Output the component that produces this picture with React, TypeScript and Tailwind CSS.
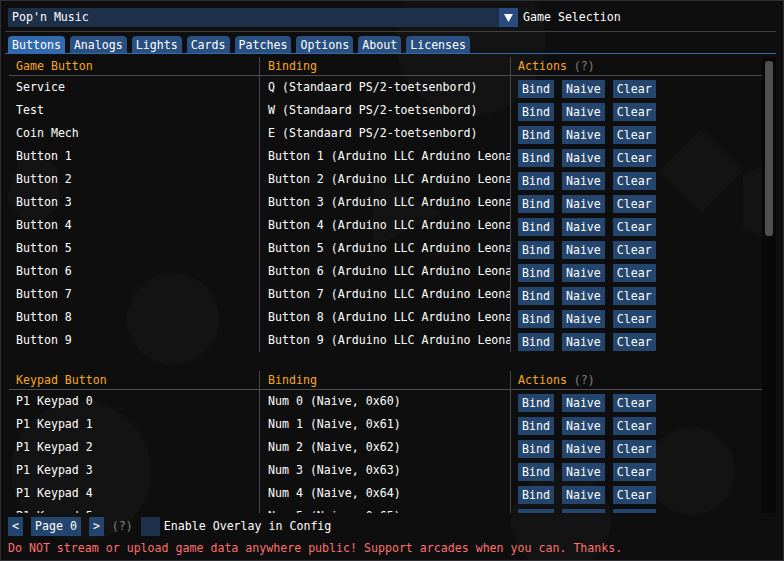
import React from "react";

const keyRows = [
  { name: "Service", binding: "Q (Standaard PS/2-toetsenbord)" },
  { name: "Test", binding: "W (Standaard PS/2-toetsenbord)" },
  { name: "Coin Mech", binding: "E (Standaard PS/2-toetsenbord)" },
  ...[1, 2, 3, 4, 5, 6, 7, 8, 9].map((n) => ({
    name: `Button ${n}`,
    binding: `Button ${n} (Arduino LLC Arduino Leonardo)`,
  })),
];

const keypadRows = [0, 1, 2, 3, 4, 5].map((n) => ({
  name: `P1 Keypad ${n}`,
  binding: `Num ${n} (Naive, 0x6${n})`,
}));

const tabs = ["Buttons", "Analogs", "Lights", "Cards", "Patches", "Options", "About", "Licenses"];

const Btn = ({ label }: { label: string }) => (
  <div className="h-[18px] px-[4px] bg-[#24456d] text-white leading-[18px] whitespace-nowrap">{label}</div>
);

const Header = ({ first }: { first: string }) => (
  <div className="flex h-[19px] border-b border-[#4c4c52]">
    <div className="w-[251px] border-r border-[#46464c] pl-[7px] pt-[3px] leading-[13px] text-[#f7a823]">{first}</div>
    <div className="w-[251px] border-r border-[#46464c] pl-[8px] pt-[3px] leading-[13px] text-[#f7a823]">Binding</div>
    <div className="flex-1 pl-[7px] pt-[3px] leading-[13px] whitespace-pre">
      <span className="text-[#f7a823]">Actions</span>
      <span className="text-[#808080]"> (?)</span>
    </div>
  </div>
);

const Row = ({ name, binding }: { name: string; binding: string }) => (
  <div className="flex h-[23px]">
    <div className="w-[251px] border-r border-[#46464c] pl-[7px] pt-[5px] leading-[13px] whitespace-nowrap overflow-hidden text-white">
      {name}
    </div>
    <div className="w-[251px] border-r border-[#46464c] pl-[8px] pt-[5px] leading-[13px] whitespace-nowrap overflow-hidden text-white">
      {binding}
    </div>
    <div className="flex-1 flex gap-[8px] pl-[7px] pt-[4px]">
      <Btn label="Bind" />
      <Btn label="Naive" />
      <Btn label="Clear" />
    </div>
  </div>
);

export default function App() {
  return (
    <div className="relative w-[784px] h-[561px] overflow-hidden bg-[#0e0e0e] border border-[#2e2e33] font-['DejaVu_Sans_Mono','Liberation_Mono',monospace] text-[11.6px] text-white">
      {/* faint background artwork */}
      <svg className="absolute inset-0" width="784" height="561" viewBox="0 0 784 561">
        <g fill="#131313">
          <circle cx="470" cy="40" r="75" />
          <polygon points="700,128 742,170 700,212 658,170" />
          <circle cx="172" cy="318" r="46" />
          <circle cx="690" cy="470" r="44" />
          <polygon points="372,178 442,212 372,246" />
          <polygon points="20,150 55,165 60,205 30,228 5,200" />
          <polygon points="742,175 760,165 760,235 742,228" />
          <circle cx="80" cy="470" r="70" />
          <circle cx="560" cy="520" r="50" />
        </g>
      </svg>

      <div className="relative flex flex-col px-[7px] pt-[7px]">
        {/* game selection combo */}
        <div className="flex items-center h-[19px]">
          <div className="flex w-[510px] h-[19px] bg-[#1d2f49]">
            <div className="flex-1 pl-[4px] leading-[19px]">Pop'n Music</div>
            <div className="w-[19px] h-[19px] bg-[#294b7c] flex items-center justify-center">
              <svg width="9" height="8" viewBox="0 0 9 8">
                <polygon points="0,0 9,0 4.5,8" fill="#fff" />
              </svg>
            </div>
          </div>
          <div className="pl-[5px] leading-[19px]">Game Selection</div>
        </div>

        <div className="mt-[4px] -ml-[3px] h-px bg-[#3e3e47]" />

        {/* tabs */}
        <div className="mt-[4px] flex gap-[5px]">
          {tabs.map((t, i) => (
            <div
              key={t}
              className={
                i === 0
                  ? "h-[17px] px-[4px] rounded-t-[4px] leading-[18px] bg-[#3369ad]"
                  : "h-[17px] px-[4px] rounded-t-[4px] leading-[18px] bg-[#2a4f81]"
              }
            >
              {t}
            </div>
          ))}
        </div>
        <div className="-ml-[3px] h-px bg-[#3369ad]" />

        {/* bindings child window */}
        <div className="mt-[3px] h-[456px] flex">
          <div className="flex-1 overflow-hidden pl-[1px]">
            <Header first="Game Button" />
            {keyRows.map((r) => (
              <Row key={r.name} name={r.name} binding={r.binding} />
            ))}
            <div className="mt-[19px]">
              <Header first="Keypad Button" />
              {keypadRows.map((r) => (
                <Row key={r.name} name={r.name} binding={r.binding} />
              ))}
            </div>
          </div>
          <div className="w-[14px] h-full bg-[#080808] px-[3px] pt-[4px]">
            <div className="h-[175px] rounded-[3px] bg-[#4f4f4f]" />
          </div>
        </div>

        {/* page controls */}
        <div className="mt-[4px] flex items-center h-[19px]">
          <div className="h-[19px] px-[4px] bg-[#24456d] leading-[19px]">&lt;</div>
          <div className="ml-[8px] h-[19px] px-[4px] bg-[#24456d] leading-[19px]">Page 0</div>
          <div className="ml-[8px] h-[19px] px-[4px] bg-[#24456d] leading-[19px]">&gt;</div>
          <div className="ml-[8px] text-[#808080] leading-[19px]">(?)</div>
          <div className="ml-[8px] w-[19px] h-[19px] bg-[#1d2f49]" />
          <div className="ml-[4px] leading-[19px]">Enable Overlay in Config</div>
        </div>

        <div className="mt-[6px] leading-[13px] text-[#ff7070] whitespace-nowrap">
          Do NOT stream or upload game data anywhere public! Support arcades when you can. Thanks.
        </div>
      </div>
    </div>
  );
}
